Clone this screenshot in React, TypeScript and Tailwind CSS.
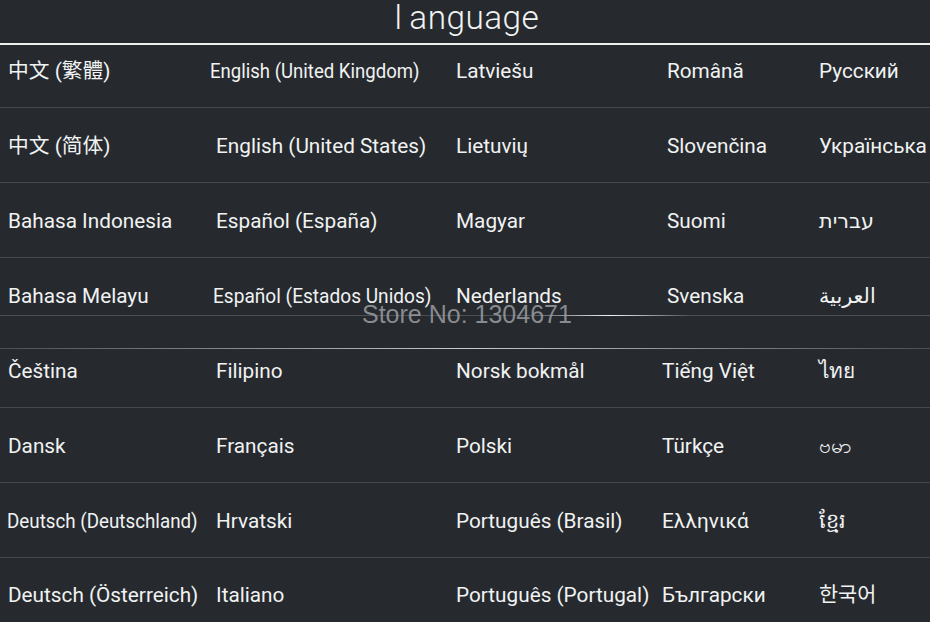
const rows: string[][] = [
  ['中文 (繁體)', 'English (United Kingdom)', 'Latviešu', 'Română', 'Русский'],
  ['中文 (简体)', 'English (United States)', 'Lietuvių', 'Slovenčina', 'Українська'],
  ['Bahasa Indonesia', 'Español (España)', 'Magyar', 'Suomi', 'עברית'],
  ['Bahasa Melayu', 'Español (Estados Unidos)', 'Nederlands', 'Svenska', 'العربية'],
  ['Čeština', 'Filipino', 'Norsk bokmål', 'Tiếng Việt', 'ไทย'],
  ['Dansk', 'Français', 'Polski', 'Türkçe', 'ဗမာ'],
  ['Deutsch (Deutschland)', 'Hrvatski', 'Português (Brasil)', 'Ελληνικά', 'ខ្មែរ'],
  ['Deutsch (Österreich)', 'Italiano', 'Português (Portugal)', 'Български', '한국어'],
];

// per-cell tweaks to follow the screenshot (some labels are drawn condensed)
const cellClass = (r: number, c: number) => {
  if (r === 0 && c === 1) return '-ml-[6px] scale-x-[0.895] origin-left';
  if (r === 3 && c === 1) return '-ml-[3px] scale-x-[0.92] origin-left';
  if (r === 6 && c === 0) return '-ml-[1px] scale-x-[0.905] origin-left';
  if (r < 4 && c === 3) return 'ml-[5px]';
  return '';
};

const rowClass = (r: number) => {
  if (r === 0) return 'h-[63px] border-b pb-[8px]';
  if (r === 7) return 'h-[64px] pt-[11px]';
  if (r === 3) return 'h-[75px] pt-[3px]';
  return 'h-[75px] border-b pt-[3px]';
};

export default function App() {
  return (
    <div
      className="relative w-[930px] h-[629px] overflow-hidden bg-white"
      style={{ fontFamily: 'Roboto, "Noto Sans", "DejaVu Sans", "Noto Sans CJK SC", sans-serif' }}
    >
      <div className="h-[622px] bg-[#262a2f] text-[#f1f2f2]">
        {/* Title */}
        <div className="h-[43px] flex items-start justify-center">
          <span className="text-[34px] font-light leading-[34px] scale-x-[0.98] tracking-[0.5px] ml-[4px]">
            <span className="mr-[7px]">l</span>anguage
          </span>
        </div>
        <div className="h-[2px] bg-[#eef0f0]" />

        {/* Language grid */}
        {rows.map((row, r) => (
          <div
            key={r}
            className={`grid grid-cols-[208px_240px_206px_157px_1fr] items-center pl-2 border-[#454a50] text-[20.75px] whitespace-nowrap ${rowClass(r)}`}
          >
            {row.map((name, c) => (
              <span key={c} className={`inline-block ${cellClass(r, c)}`}>
                {name}
              </span>
            ))}
          </div>
        ))}
      </div>

      {/* Glitch lines and watermark laid over the list */}
      <div className="absolute left-0 top-[315px] w-full h-px bg-[#4a4f55]" />
      <div className="absolute left-[530px] top-[315px] w-[160px] h-px bg-gradient-to-r from-transparent via-[#f4f4f4] to-transparent" />
      <div className="absolute left-0 top-[348px] w-full h-px bg-gradient-to-r from-[#4a4f55] via-[#c9cbcd] to-[#4a4f55]" />
      <div
        className="absolute left-[362px] top-[302px] text-[25px] leading-none text-[#9c9ea0]/85"
        style={{ fontFamily: '"Liberation Sans", Arial, sans-serif' }}
      >
        Store No: 1304671
      </div>
    </div>
  );
}
